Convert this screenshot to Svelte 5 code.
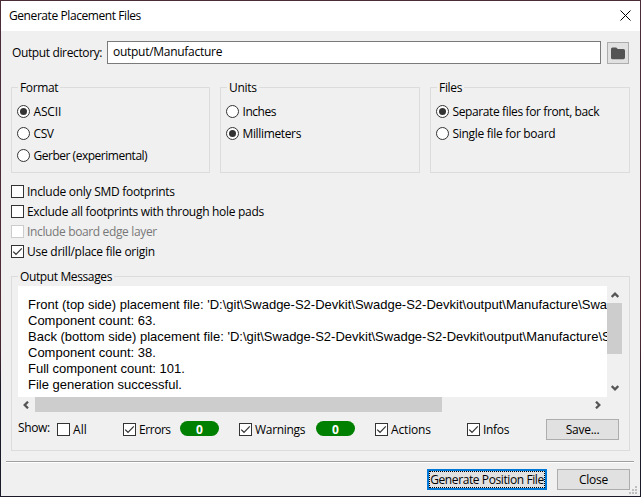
<script>
  const groups = [
    {
      title: 'Format',
      ls: -0.35,
      options: [
        { label: 'ASCII', on: true, ls: -0.15 },
        { label: 'CSV', ls: -0.4 },
        { label: 'Gerber (experimental)', ls: -0.48 }
      ]
    },
    {
      title: 'Units',
      ls: -0.3,
      options: [
        { label: 'Inches', ls: -0.45 },
        { label: 'Millimeters', on: true, ls: -0.35 }
      ]
    },
    {
      title: 'Files',
      ls: -0.3,
      options: [
        { label: 'Separate files for front, back', on: true, ls: -0.38 },
        { label: 'Single file for board', ls: -0.3 }
      ]
    }
  ];

  const flags = [
    { label: 'Include only SMD footprints', ls: -0.28 },
    { label: 'Exclude all footprints with through hole pads', ls: -0.3 },
    { label: 'Include board edge layer', off: true, ls: -0.36 },
    { label: 'Use drill/place file origin', on: true, ls: -0.25 }
  ];

  const messages = [
    "Front (top side) placement file: 'D:\\git\\Swadge-S2-Devkit\\Swadge-S2-Devkit\\output\\Manufacture\\Swadge-S2-Devkit-top.pos'.",
    'Component count: 63.',
    "Back (bottom side) placement file: 'D:\\git\\Swadge-S2-Devkit\\Swadge-S2-Devkit\\output\\Manufacture\\Swadge-S2-Devkit-bottom.pos'.",
    'Component count: 38.',
    'Full component count: 101.',
    'File generation successful.'
  ];

  const filters = [
    { label: 'All', width: 66, ls: 0.1 },
    { label: 'Errors', on: true, width: 57, count: 0, ls: -0.45 },
    { label: 'Warnings', on: true, width: 77, count: 0, ls: -0.3 },
    { label: 'Actions', on: true, width: 92, ls: -0.15 },
    { label: 'Infos', on: true, width: 79, ls: -0.3 }
  ];
</script>

{#snippet box(on, off)}
  <svg class="mark" width="13" height="13" viewBox="0 0 13 13">
    <rect x=".5" y=".5" width="12" height="12" fill="#fff" stroke={off ? '#ccc' : '#333'} />
    {#if on}<path d="M2.2 6.6 5 9.3 10.8 3.4" fill="none" stroke="#333" stroke-width="1.2" />{/if}
  </svg>
{/snippet}

<div class="window">
  <header>
    <span class="title">Generate Placement Files</span>
    <svg width="11" height="11" viewBox="0 0 11 11"><path d="M.5.5l10 10M10.5.5l-10 10" stroke="#000" fill="none" /></svg>
  </header>

  <div class="directory">
    <span class="dirlabel">Output directory:</span>
    <div class="field"><span>output/Manufacture</span></div>
    <button class="browse" aria-label="Browse">
      <svg width="14" height="13" viewBox="0 0 14 13"><path d="M1.4.5h3.8L6.8 2.1h5.6q1.6 0 1.6 1.5v7q0 1.7-1.6 1.7H1.6Q0 12.3 0 10.7V2Q0 .5 1.4.5Z" fill="#545454" /></svg>
    </button>
  </div>

  <div class="groups">
    {#each groups as g}
      <section class="group">
        <div class="legend"><span style:letter-spacing="{g.ls}px">{g.title}</span></div>
        {#each g.options as o}
          <div class="option">
            <svg class="mark" width="13" height="13" viewBox="0 0 13 13">
              <circle cx="6.5" cy="6.5" r="6" fill="#fff" stroke="#333" />
              {#if o.on}<circle cx="6.5" cy="6.5" r="3.5" fill="#333" />{/if}
            </svg>
            <span style:letter-spacing="{o.ls}px">{o.label}</span>
          </div>
        {/each}
      </section>
    {/each}
  </div>

  <div class="flags">
    {#each flags as f}
      <div class="flag" class:off={f.off}>
        {@render box(f.on, f.off)}
        <span style:letter-spacing="{f.ls}px">{f.label}</span>
      </div>
    {/each}
  </div>

  <section class="output">
    <div class="legend"><span class="outtitle">Output Messages</span></div>
    <div class="log">
      <div class="lines">
        {#each messages as m}<div>{m}</div>{/each}
      </div>
      <div class="vbar">
        <svg width="8" height="6" viewBox="0 0 8 6"><path d="M.7 5 4 1.7 7.3 5" fill="none" stroke="#555" stroke-width="2.3" /></svg>
        <i></i>
        <svg class="down" width="8" height="6" viewBox="0 0 8 6"><path d="M.7 1 4 4.3 7.3 1" fill="none" stroke="#555" stroke-width="2.3" /></svg>
      </div>
      <div class="hbar">
        <svg width="6" height="8" viewBox="0 0 6 8"><path d="M5 .7 1.7 4 5 7.3" fill="none" stroke="#555" stroke-width="2.3" /></svg>
        <i></i>
        <svg class="right" width="6" height="8" viewBox="0 0 6 8"><path d="M1 .7 4.3 4 1 7.3" fill="none" stroke="#555" stroke-width="2.3" /></svg>
      </div>
    </div>
    <div class="show">
      <span class="showlabel">Show:</span>
      {#each filters as f}
        <div class="filter" style:width="{f.width}px">
          {@render box(f.on, false)}
          <span style:letter-spacing="{f.ls}px">{f.label}</span>
        </div>
        {#if f.count !== undefined}<b class="badge">{f.count}</b>{/if}
      {/each}
      <button class="push save">Save...</button>
    </div>
  </section>

  <footer>
    <button class="push primary"><span>Generate Position File</span></button>
    <button class="push">Close</button>
  </footer>
  <svg class="grip" width="8" height="8" viewBox="0 0 8 8" fill="#bfbfbf"><path d="M6 0h2v2H6zM3 3h2v2H3zM6 3h2v2H6zM0 6h2v2H0zM3 6h2v2H3zM6 6h2v2H6z" /></svg>
</div>

<style>
  .window {
    position: relative;
    box-sizing: border-box;
    width: 641px;
    height: 497px;
    overflow: hidden;
    border: 1px solid transparent;
    background:
      linear-gradient(#f0f0f0, #f0f0f0) padding-box,
      linear-gradient(#4a2b38 0 20%, #512a35 60%, #45252f 70%, #1a1a28 78% 100%) border-box;
    font: 12px/16px 'Open Sans', 'Noto Sans', sans-serif;
    color: #000;
    white-space: nowrap;
  }
  svg { display: block; flex: none; }
  .mark { margin-bottom: 1px; }
  button {
    box-sizing: border-box;
    padding: 0;
    font: inherit;
    color: #000;
    background: #e1e1e1;
    border: 1px solid #adadad;
    white-space: nowrap;
  }
  header {
    display: flex;
    align-items: center;
    justify-content: space-between;
    height: 30px;
    padding: 0 9px 0 8px;
    box-sizing: border-box;
    background: #fff;
  }
  header svg { margin-bottom: 1px; }
  .title { letter-spacing: -0.42px; }
  .directory {
    display: flex;
    align-items: flex-start;
    padding: 10px 0 0 11px;
    height: 46px;
  }
  .dirlabel { width: 95px; padding-top: 4px; letter-spacing: -0.37px; }
  .field {
    box-sizing: border-box;
    width: 494px;
    height: 23px;
    padding: 2px 5px;
    background: #fff;
    border: 1px solid #7a7a7a;
    letter-spacing: -0.28px;
  }
  .browse {
    display: grid;
    place-items: center;
    width: 22px;
    height: 22px;
    margin: 1px 0 0 6px;
  }
  .groups {
    display: grid;
    grid-template-columns: 199px 200px 200px;
    gap: 10px;
    padding-left: 10px;
  }
  .group, .output {
    box-sizing: border-box;
    border: 1px solid #dcdcdc;
  }
  .group { height: 86px; padding-left: 5px; }
  .legend { height: 13px; margin-top: -8px; padding-left: 1px; }
  .legend span { display: inline-block; height: 16px; padding: 0 2px; background: #f0f0f0; }
  .option {
    display: flex;
    align-items: center;
    gap: 3.5px;
    height: 22px;
  }
  .group .legend + .option { margin-top: 8px; }
  .flags { padding: 9px 0 0 10px; }
  .flag {
    display: flex;
    align-items: center;
    gap: 3px;
    height: 20px;
  }
  .flag.off { color: #787878; }
  .output {
    width: 619px;
    height: 175px;
    margin: 14px 0 0 10px;
    padding-left: 6px;
  }
  .output .legend { height: 17px; padding: 0; }
  .outtitle { letter-spacing: -0.38px; }
  .log {
    display: grid;
    grid-template: 111px 15px / 589px 15px;
  }
  .lines {
    overflow: hidden;
    padding: 11px 0 0 10px;
    background: #fff;
    font: 13px/16px 'Liberation Sans', Arial, sans-serif;
  }
  .vbar, .hbar { display: flex; align-items: center; }
  .vbar { flex-direction: column; padding: 6px 0; }
  .vbar i { width: 15px; height: 51px; margin-top: 5px; background: #cdcdcd; }
  .down { margin-top: auto; }
  .hbar { padding: 0 6px 0 5px; }
  .hbar i { width: 407px; height: 15px; margin-left: 6px; background: #cdcdcd; }
  .right { margin-left: auto; }
  .show {
    display: flex;
    height: 34px;
    align-items: center;
  }
  .showlabel { width: 39px; margin-top: -2px; letter-spacing: -0.35px; }
  .filter { display: flex; align-items: center; gap: 3px; margin-top: 2px; }
  .badge {
    width: 39px;
    height: 15px;
    margin-right: 20px;
    margin-top: -1px;
    border-radius: 8px;
    background: #008000;
    color: #fff;
    line-height: 17px;
    text-align: center;
  }
  .push { height: 21px; width: 73px; line-height: 19px; letter-spacing: -0.25px; }
  .save { margin-top: 1px; }
  footer {
    display: flex;
    justify-content: flex-end;
    gap: 10px;
    margin: 10px 6px 0 5px;
    padding: 7px 4px 0 0;
    border-top: 1px solid #a0a0a0;
    box-shadow: inset 0 1px #fff;
  }
  .primary {
    width: 120px;
    border: 2px solid #0078d7;
    line-height: 15px;
    letter-spacing: -0.4px;
  }
  .primary span { display: block; border: 1px dotted #000; height: 15px; }
  .grip { position: absolute; right: 3px; bottom: 2px; }
</style>
